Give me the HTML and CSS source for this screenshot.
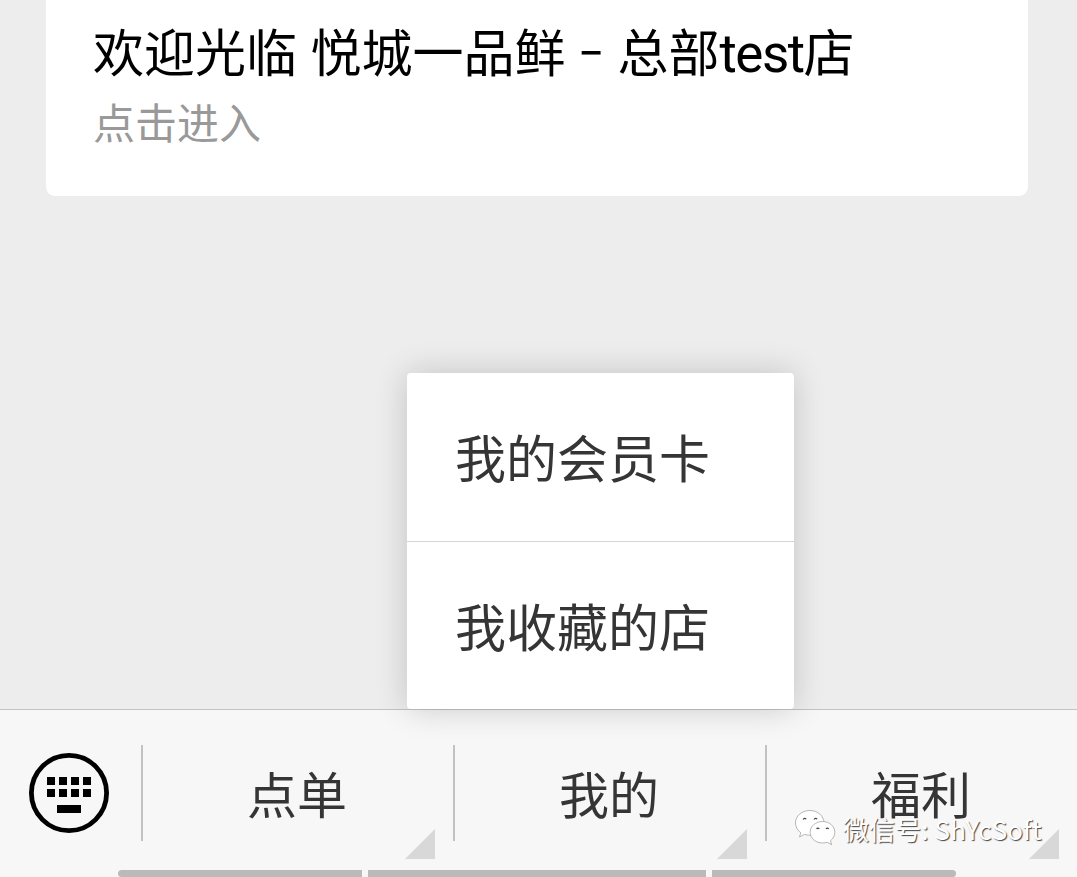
FILE: index.html
```html
<!DOCTYPE html>
<html lang="zh-CN">
<head>
    <meta charset="UTF-8">
    <meta name="viewport" content="width=device-width, initial-scale=1.0">
    <title>悦城一品鲜</title>
    <link rel="stylesheet" href="styles.css">
</head>
<body>
    <!-- 聊天区域 -->
    <div class="chat">
        <div class="card">
            <div class="card-title">欢迎光临 悦城一品鲜<span class="dash">-</span>总部<span class="latin">test</span>店</div>
            <div class="card-desc">点击进入</div>
        </div>
    </div>

    <!-- 底部菜单 -->
    <div class="toolbar">
        <div class="keyboard">
            <svg width="80" height="80" viewBox="0 0 80 80">
                <circle cx="40" cy="40" r="37.6" fill="none" stroke="#000" stroke-width="4.8"/>
                <path d="M18 24h8v8h-8zM30 24h8v8h-8zM42 24h8v8h-8zM54 24h8v8h-8zM18 36h8v8h-8zM30 36h8v8h-8zM42 36h8v8h-8zM54 36h8v8h-8zM28 52h24v8h-24z"/>
            </svg>
        </div>
        <div class="tab">点单</div>
        <div class="tab">
            我的
            <!-- 弹出的子菜单 -->
            <div class="popup">
                <div class="popup-item">我的会员卡</div>
                <div class="popup-item">我收藏的店</div>
            </div>
        </div>
        <div class="tab">福利</div>
    </div>

    <!-- 底部灰条 -->
    <div class="strips">
        <div class="strip side"></div>
        <div class="strip"></div>
        <div class="strip side"></div>
    </div>

    <!-- 水印 -->
    <div class="watermark">
        <svg width="44" height="38" viewBox="0 0 44 38">
            <g fill="#fff" stroke="#999" stroke-width="0.7">
                <path d="M16 1.500C7.500 1.500 1.500 7 1.500 14c0 4 2 7.500 5.300 9.700L5.500 28l5-2.600c1.800.5 3.500.8 5.500.8 8 0 14-5.500 14-12.200S24 1.500 16 1.500z"/>
                <path d="M28.500 12.500c-7 0-12.300 4.800-12.300 10.700S21.500 34 28.500 34c1.700 0 3.200-.2 4.700-.7l4.500 2.400-1.300-3.900c2.700-2 4.400-5 4.400-8.600 0-5.900-5.300-10.700-12.300-10.700z"/>
            </g>
            <g fill="none" stroke="#444" stroke-width="1.200">
                <path d="M9 10.500q1.500-2 3.200-.3M20 10.500q1.500-2 3.200-.3M22.500 20q1.300-1.700 2.800-.2M32 20q1.300-1.700 2.800-.2"/>
            </g>
        </svg>
        <span>微信号: ShYcSoft</span>
    </div>
</body>
</html>
```

FILE: styles.css
```css
body {
    margin: 0;
    height: 877px;
    display: flex;
    flex-direction: column;
    position: relative;
    overflow: hidden;
    background-color: #ededed;
    font-family: "Noto Sans CJK SC", sans-serif;
}
.chat {
    height: 709px;
    padding: 0 49px 0 46px;
}
.card {
    box-sizing: border-box;
    height: 196px;
    padding: 17px 48px 0 47px;
    background-color: #fff;
    border-radius: 0 0 9px 9px;
    white-space: nowrap;
}
.card-title {
    height: 66px;
    line-height: 66px;
    font-size: 51px;
    word-spacing: 2px;
    color: #000;
}
.card-desc {
    margin-top: 12px;
    height: 52px;
    line-height: 52px;
    font-size: 42px;
    color: #999;
}
.dash {
    display: inline-block;
    width: 52px;
    text-align: center;
    transform: translateY(-5px) scaleX(1.45);
}
.latin {
    font-family: Roboto, sans-serif;
    font-size: 53px;
    letter-spacing: -1.5px;
}
.toolbar {
    box-sizing: border-box;
    height: 161px;
    display: flex;
    border-top: 1px solid #c3c3c3;
    background-color: #f7f7f7;
}
.keyboard {
    width: 141px;
    flex-shrink: 0;
    box-sizing: border-box;
    padding: 43px 0 0 29px;
}
.tab {
    position: relative;
    width: 312px;
    flex-shrink: 0;
    line-height: 164px;
    text-align: center;
    font-size: 50px;
    color: #353535;
}
/* 左侧分隔线 */
.tab::before {
    content: "";
    position: absolute;
    left: 0;
    top: 35px;
    width: 2px;
    height: 96px;
    background-color: #c2c2c2;
}
/* 右下角三角 */
.tab::after {
    content: "";
    position: absolute;
    right: 18px;
    top: 119px;
    border-left: 30px solid transparent;
    border-bottom: 30px solid #d8d8d8;
}
.popup {
    position: absolute;
    left: -46px;
    top: -337px;
    width: 387px;
    background-color: #fff;
    border-radius: 4px;
    box-shadow: 0 0 32px rgba(0, 0, 0, 0.18);
    text-align: left;
}
.popup-item {
    box-sizing: border-box;
    height: 168px;
    padding-left: 48px;
    line-height: 166px;
    font-size: 51px;
}
.popup-item + .popup-item {
    border-top: 1px solid #d5d5d5;
}
.strips {
    height: 7px;
    display: flex;
    gap: 6px;
    padding-left: 118px;
    background-color: #f7f7f7;
}
.strip {
    width: 338px;
    background-color: #bababa;
}
.strip.side {
    width: 244px;
}
.strip:first-child {
    border-radius: 4px 0 0 4px;
}
.strip:last-child {
    border-radius: 0 4px 4px 0;
}
.watermark {
    position: absolute;
    left: 794px;
    top: 809px;
    display: flex;
    gap: 5px;
    font-size: 26px;
    line-height: 40px;
    letter-spacing: 0.1px;
    color: #fff;
    text-shadow: 1px 1px 1px #444;
    white-space: nowrap;
}
```
